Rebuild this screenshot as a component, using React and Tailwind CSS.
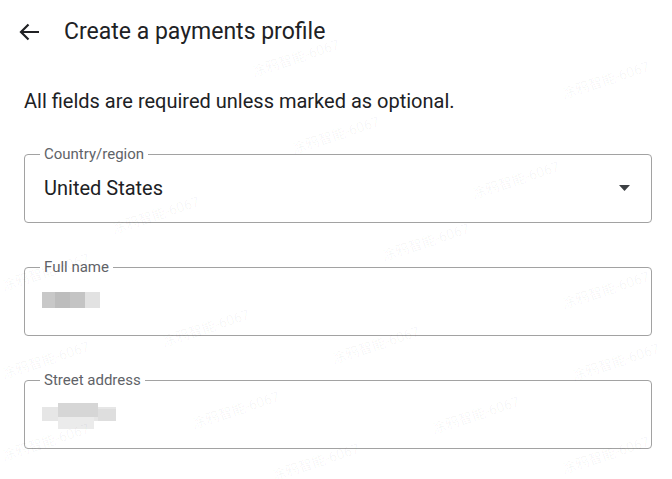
import React from 'react';

const marks = [
  { x: 250, y: 48 }, { x: 560, y: 70 }, { x: 290, y: 125 }, { x: 110, y: 205 },
  { x: 470, y: 170 }, { x: 0, y: 262 }, { x: 380, y: 232 }, { x: 160, y: 318 },
  { x: 560, y: 280 }, { x: 330, y: 335 }, { x: 0, y: 350 }, { x: 570, y: 352 },
  { x: 190, y: 400 }, { x: 430, y: 405 }, { x: 0, y: 432 }, { x: 270, y: 452 }, { x: 560, y: 445 },
];

function Field({ label, children, icon }) {
  return (
    <fieldset className="ml-6 mr-5 border border-[#a2a2a2] rounded-[4px] px-[15px]">
      <legend className="px-[4px] text-[15px] leading-[18px] text-[#5f6368]">{label}</legend>
      <div className="h-[59px] pt-[12px] pl-[4px] pr-[6px] flex justify-between">
        <div className="text-[20px] leading-[26px] text-[#202124]">{children}</div>
        {icon}
      </div>
    </fieldset>
  );
}

export default function App() {
  return (
    <div className="relative w-[672px] h-[479px] bg-white overflow-hidden" style={{ fontFamily: 'Roboto, "Noto Sans CJK SC", sans-serif' }}>
      <div className="flex items-center h-[62px] pt-[2px] pl-[19px]">
        <svg width="21" height="18" viewBox="0 0 21 18" fill="none" stroke="#202124" strokeWidth="2.2">
          <path d="M20 9H2M9.5 1.5L2 9l7.5 7.5" />
        </svg>
        <h1 className="ml-[24px] text-[23px] leading-[28px] text-[#202124]">Create a payments profile</h1>
      </div>

      <p className="mt-[26px] px-6 text-[20px] leading-[26px] text-[#202124]">All fields are required unless marked as optional.</p>

      <div className="mt-[31px] space-y-[35px]">
        <Field
          label="Country/region"
          icon={
            <svg width="11" height="6" viewBox="0 0 11 6" className="mt-[10px]">
              <path d="M0 0h11L5.5 6z" fill="#3c4043" />
            </svg>
          }
        >
          United States
        </Field>
        <Field label="Full name">
          <div className="mt-[4px] -ml-[2px] h-[16px] w-[58px] flex">
            <div className="h-full w-[13px] bg-[#c8c8c8]" />
            <div className="h-full w-[15px] bg-[#bdbdbd]" />
            <div className="h-full w-[15px] bg-[#c4c4c4]" />
            <div className="h-full w-[15px] bg-[#e2e2e2]" />
          </div>
        </Field>
        <Field label="Street address">
          <div className="mt-[2px] -ml-[2px] relative h-[26px] w-[76px]">
            <div className="absolute left-0 top-[4px] w-[74px] h-[14px] bg-[#e6e6e6]" />
            <div className="absolute left-[16px] top-0 w-[40px] h-[14px] bg-[#d6d6d6]" />
            <div className="absolute left-[16px] top-[14px] w-[36px] h-[12px] bg-[#ebebeb]" />
            <div className="absolute left-[56px] top-[6px] w-[18px] h-[12px] bg-[#dedede]" />
          </div>
        </Field>
      </div>

      {marks.map((m, i) => (
        <div
          key={i}
          className="absolute text-[14px] text-[#000000]/[0.04] -rotate-[18deg] pointer-events-none whitespace-nowrap"
          style={{ left: m.x, top: m.y }}
        >
          涂鸦智能-6067
        </div>
      ))}
    </div>
  );
}
